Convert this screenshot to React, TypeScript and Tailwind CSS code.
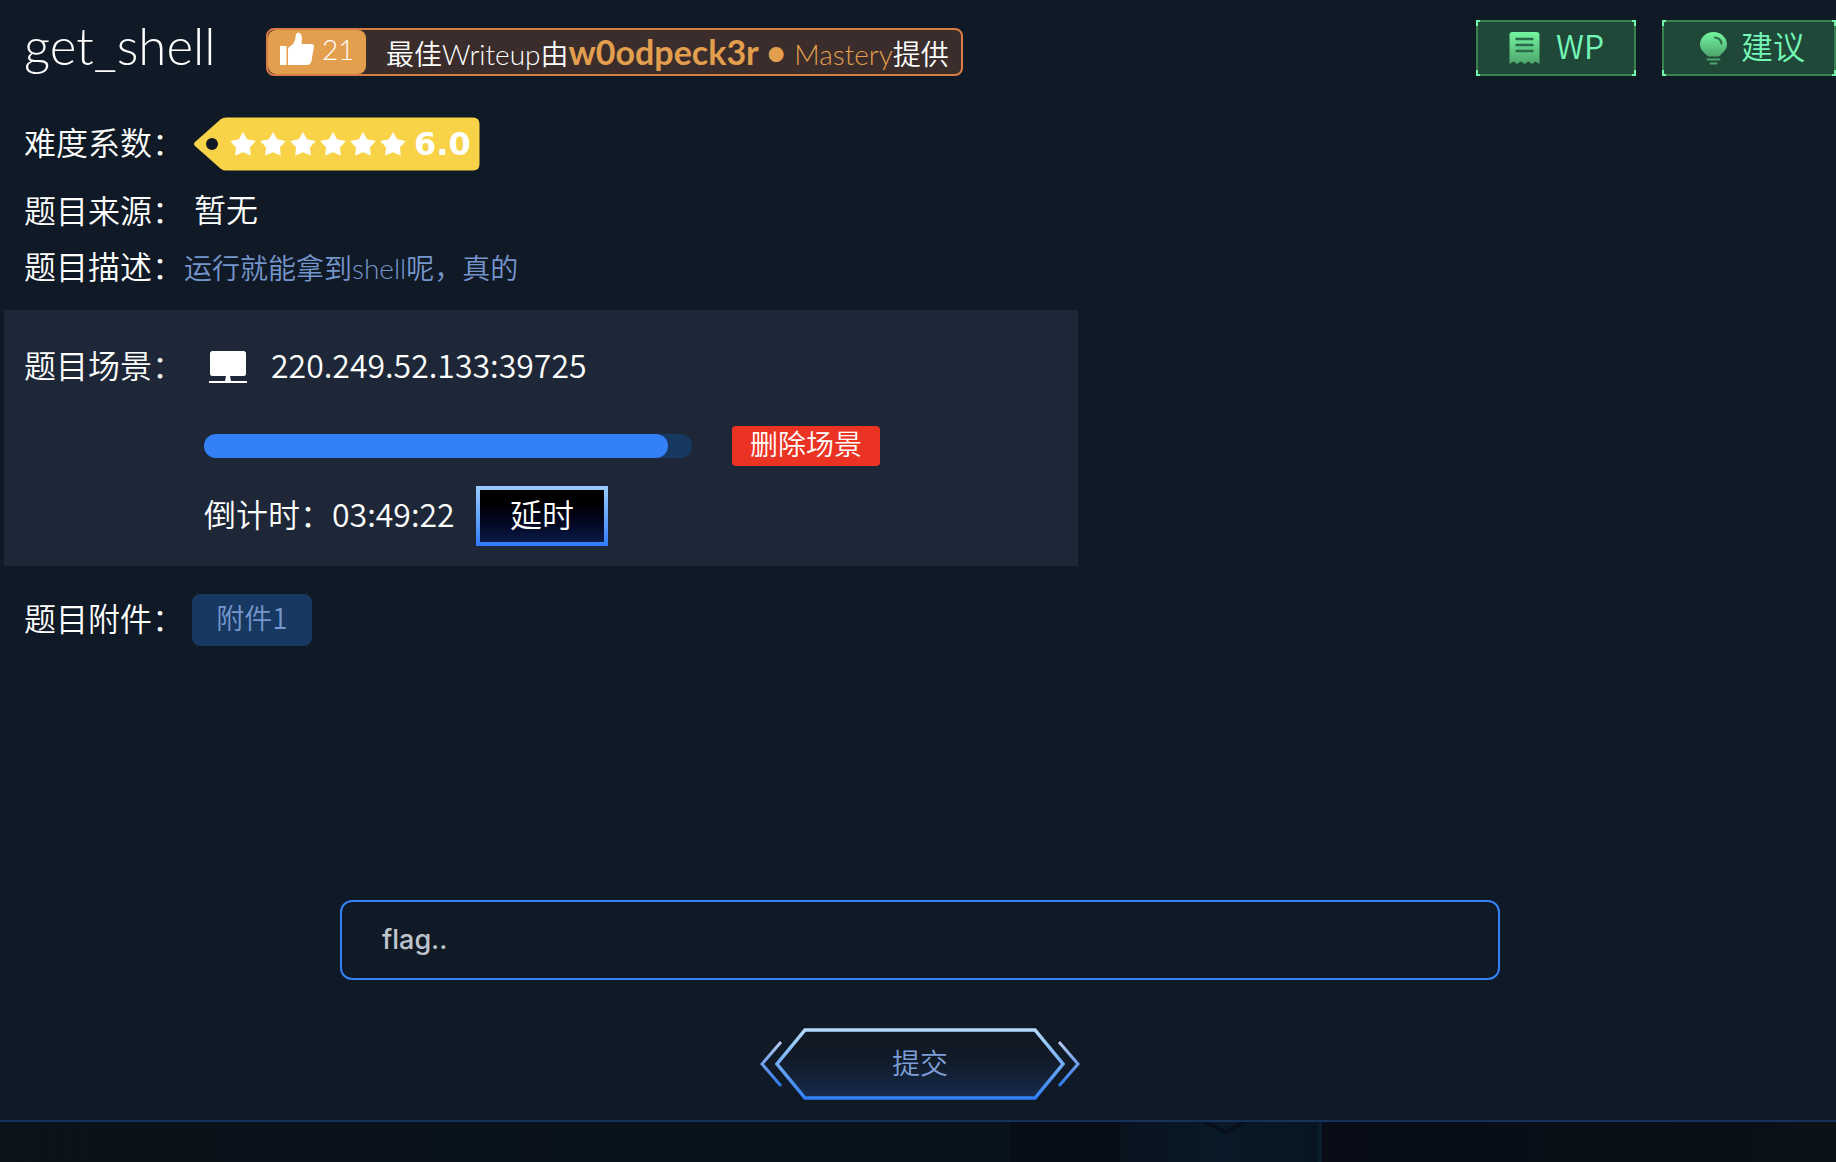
import React, { useState } from 'react';

const RATING = 6;
const PROGRESS = 95;

const RatingTag: React.FC<{ stars: number }> = ({ stars }) => (
    <div className="relative ml-[10px] flex h-[54px] w-[286px] items-center pl-9">
        <svg className="absolute inset-0" width="286" height="54" viewBox="0 0 286 54" aria-hidden="true">
            <path
                fillRule="evenodd"
                d="M1 25 L27 2 Q29 0.5 32 0.5 H279 Q285.5 0.5 285.5 7 V47 Q285.5 53.5 279 53.5 H32 Q29 53.5 27 52 L1 29 Q-1 27 1 25Z M12 27 a6 6 0 1 0 12 0 a6 6 0 1 0 -12 0Z"
                fill="#f8d348"
            />
        </svg>
        <div className="relative flex gap-1">
            {Array.from({ length: stars }).map((_, i) => (
                <svg key={i} width="26" height="26" viewBox="0 0 26 26" fill="#fff" aria-hidden="true">
                    <path d="M13 1 L17.2 8.2 L25.8 10 L20 16.2 L20.8 24.5 L13 21.2 L5.2 24.5 L6 16.2 L0.2 10 L8.8 8.2Z" />
                </svg>
            ))}
        </div>
        <span className="relative ml-2 font-['DejaVu_Sans',sans-serif] text-[32px] leading-none font-bold">{stars.toFixed(1)}</span>
    </div>
);

const ThumbIcon = () => (
    <svg width="34" height="34" viewBox="0 0 34 34" fill="#fff" aria-hidden="true">
        <path d="M0 14 H6.5 V33 H0Z" />
        <path d="M9 15 L12.5 12.5 Q15.5 9 15.8 3 Q16.3 0.5 18.5 0.5 Q22 1.5 22 6.5 L21.5 12 H32 Q34 12 34 14.5 L31.5 29 Q30.5 33 27 33 H9 Q8 33 8 32 V16.5Z" />
    </svg>
);

const NoteIcon = () => (
    <svg width="31" height="33" viewBox="0 0 31 33" aria-hidden="true">
        <defs>
            <linearGradient id="note" x1="0" y1="0" x2="0" y2="1">
                <stop offset="0" stopColor="#74f5a0" />
                <stop offset="1" stopColor="#4da56c" />
            </linearGradient>
        </defs>
        <path d="M3.5 0 H27.5 Q30.5 0 30.5 3 V32 L26.5 29.5 L23 32 L19.5 29.5 L15.5 32 L12 29.5 L8 32 L4.5 29.5 L0.5 32 V3 Q0.5 0 3.5 0Z" fill="url(#note)" />
        <path d="M7.5 7 H23.5 M7.5 13 H23.5 M7.5 19 H23.5" stroke="#2b6a49" strokeWidth="2.4" strokeLinecap="round" />
    </svg>
);

const BulbIcon = () => (
    <svg width="27" height="33" viewBox="0 0 27 33" aria-hidden="true">
        <defs>
            <linearGradient id="bulb" x1="0" y1="0" x2="0" y2="1">
                <stop offset="0" stopColor="#74f5a0" />
                <stop offset="1" stopColor="#4da56c" />
            </linearGradient>
        </defs>
        <path d="M13.5 0 C21 0 27 5.5 27 12.5 C27 17 24 19.5 21 22.5 Q19.5 24.5 18 24.5 H9 Q7.5 24.5 6 22.5 C3 19.5 0 17 0 12.5 C0 5.5 6 0 13.5 0Z" fill="url(#bulb)" />
        <path d="M15 5.5 Q20.5 6 21.5 11.5" stroke="#2b6a49" strokeWidth="2" strokeLinecap="round" fill="none" />
        <path d="M7.5 27.5 H19.5 M10.5 31.5 H16.5" stroke="#4da56c" strokeWidth="2" strokeLinecap="round" />
    </svg>
);

const MonitorIcon = () => (
    <svg width="38" height="32" viewBox="0 0 38 32" fill="#fff" aria-hidden="true">
        <rect x="1" y="0" width="36" height="25" rx="2.5" />
        <path d="M17 25 H21 L22 30 H38 V32 H0 V30 H16Z" />
    </svg>
);

// Green action button with bright corner brackets
const HeaderButton: React.FC<{ icon: React.ReactNode; className: string; children: React.ReactNode }> = ({ icon, className, children }) => (
    <button type="button" className={`relative flex h-14 items-center border-2 border-[#37804f] bg-[#1f4838] text-[32px] leading-none text-[#74f8b8] ${className}`}>
        <span className="absolute -top-0.5 -left-0.5 h-1.5 w-1 border-t-2 border-l-2 border-[#74f8a8]" />
        <span className="absolute -top-0.5 -right-0.5 h-1.5 w-1 border-t-2 border-r-2 border-[#74f8a8]" />
        <span className="absolute -bottom-0.5 -left-0.5 h-1.5 w-1 border-b-2 border-l-2 border-[#74f8a8]" />
        <span className="absolute -right-0.5 -bottom-0.5 h-1.5 w-1 border-r-2 border-b-2 border-[#74f8a8]" />
        {icon}
        <span className="pb-1.5">{children}</span>
    </button>
);

const Label: React.FC<{ children: React.ReactNode }> = ({ children }) => (
    <span className="w-40 shrink-0 pb-1.5 text-[32px] leading-none whitespace-nowrap">{children}：</span>
);

const SubmitButton = () => (
    <button type="submit" className="relative mt-12 flex h-[72px] w-[320px] items-center justify-center pb-1 text-[28px] leading-none text-[#7d9fd8]">
        <svg className="absolute inset-0" width="320" height="72" viewBox="0 0 320 72" fill="none" aria-hidden="true">
            <defs>
                <linearGradient id="edge" gradientUnits="userSpaceOnUse" x1="0" y1="0" x2="0" y2="72">
                    <stop offset="0" stopColor="#b4dcfb" />
                    <stop offset="1" stopColor="#2f7cf6" />
                </linearGradient>
                <linearGradient id="fill" x1="0" y1="0" x2="0" y2="1">
                    <stop offset="0" stopColor="#111722" />
                    <stop offset="0.4" stopColor="#101a26" />
                    <stop offset="1" stopColor="#172a4c" />
                </linearGradient>
                <linearGradient id="wing" gradientUnits="userSpaceOnUse" x1="0" y1="13" x2="0" y2="59">
                    <stop offset="0" stopColor="#b8cdf0" />
                    <stop offset="1" stopColor="#2673ee" />
                </linearGradient>
            </defs>
            <path d="M45 2 H275 L303 36 L275 70 H45 L17 36Z" fill="url(#fill)" stroke="url(#edge)" strokeWidth="3.5" />
            <path d="M21 14 L2 36 L21 58 M299 14 L318 36 L299 58" stroke="url(#wing)" strokeWidth="3" />
        </svg>
        <span className="relative">提交</span>
    </button>
);

const App: React.FC = () => {
    const [flag, setFlag] = useState('');

    return (
        <div className="flex min-h-screen flex-col bg-[#101a26] font-['Noto_Sans_CJK_SC',sans-serif] font-[350] text-white">
            <main className="border-b-2 border-[#16315a] pb-5 pl-1">
                <header className="flex items-end justify-between pt-5 pl-5">
                    <div className="flex items-end">
                        <h1 className="h-14 w-[242px] font-['Lato',sans-serif] text-[51px] leading-[52px]">get_shell</h1>
                        <div className="flex h-12 items-center rounded-lg border-2 border-[#d97b45] bg-[#3a2d2c] pr-3 font-['Lato','Noto_Sans_CJK_SC',sans-serif] whitespace-nowrap">
                            <div className="flex h-11 w-[98px] items-center gap-2 rounded-lg bg-[#e39e4e] pb-1.5 pl-3 text-[28px] leading-none">
                                <ThumbIcon />
                                <span>21</span>
                            </div>
                            <p className="ml-5 pt-1 text-[28px] leading-[40px]">
                                最佳Writeup由
                                <span className="text-[#e39e4e]">
                                    <b className="text-[34px] leading-none font-bold">w0odpeck3r • </b>
                                    Mastery
                                </span>
                                提供
                            </p>
                        </div>
                    </div>
                    <div className="flex gap-[26px]">
                        <HeaderButton icon={<NoteIcon />} className="w-40 gap-4 pl-[31px]">WP</HeaderButton>
                        <HeaderButton icon={<BulbIcon />} className="w-[174px] gap-3.5 pl-9">建议</HeaderButton>
                    </div>
                </header>

                <div className="mt-10 flex h-14 items-center pl-5">
                    <Label>难度系数</Label>
                    <RatingTag stars={RATING} />
                </div>
                <div className="mt-2 flex h-16 items-center pl-5">
                    <Label>题目来源</Label>
                    <span className="ml-[10px] pb-2 text-[32px] leading-none">暂无</span>
                </div>
                <div className="flex h-12 items-center pl-5">
                    <Label>题目描述</Label>
                    <span className="font-['Lato','Noto_Sans_CJK_SC',sans-serif] text-[28px] leading-none text-[#7596cc]">运行就能拿到shell呢，真的</span>
                </div>

                <section className="mt-[18px] flex w-full max-w-[1074px] bg-[#1e2738] pt-8 pb-5 pl-5">
                    <div className="flex h-[50px] items-center">
                        <Label>题目场景</Label>
                    </div>
                    <div className="ml-5">
                        <div className="flex h-[50px] items-center gap-6 pl-[5px] text-[32px] leading-none">
                            <MonitorIcon />
                            <span className="pb-1.5">220.249.52.133:39725</span>
                        </div>
                        <div className="mt-[34px] flex items-center gap-10">
                            <div className="h-6 w-[488px] rounded-full bg-[#173860]">
                                <div className="h-6 rounded-full bg-[#3480f7]" style={{ width: `${PROGRESS}%` }} />
                            </div>
                            <button type="button" className="h-10 w-[148px] rounded bg-[#eb3324] pb-1.5 text-[28px] leading-none">删除场景</button>
                        </div>
                        <div className="mt-5 flex items-center text-[32px] leading-none">
                            <span className="w-32 pb-1.5 whitespace-nowrap">倒计时：</span>
                            <span className="w-36 pb-1.5">03:49:22</span>
                            <button type="button" className="h-[60px] w-[132px] bg-linear-to-b from-[#9bcbff] to-[#2f7bff] p-1">
                                <span className="flex h-full items-center justify-center bg-linear-to-b from-black to-[#0a1a48] pb-1.5">延时</span>
                            </button>
                        </div>
                    </div>
                </section>

                <div className="mt-7 flex h-[52px] items-center pl-5">
                    <Label>题目附件</Label>
                    <a href="#attachment" className="ml-2 flex h-[52px] w-[120px] items-center justify-center rounded-lg bg-[#173860] pb-1.5 text-[28px] leading-none text-[#7596cc]">附件1</a>
                </div>

                <form className="mt-[254px] flex flex-col items-center" onSubmit={(e) => e.preventDefault()}>
                    <input
                        type="text"
                        aria-label="flag"
                        placeholder="flag.."
                        value={flag}
                        onChange={(e) => setFlag(e.target.value)}
                        className="h-20 w-full max-w-[1160px] rounded-xl border-2 border-[#3480f7] bg-transparent px-10 pb-0.5 font-['Inter',sans-serif] text-[27px] font-medium outline-none placeholder:text-[#c0c4cc]"
                    />
                    <SubmitButton />
                </form>
            </main>

            <footer className="flex min-h-10 flex-1 bg-linear-to-r from-[#0b131a] via-[#080f18] to-[#0a1117]">
                <div className="w-[55%] bg-linear-to-r from-transparent to-[#08131c]" />
                <div className="w-[6%] bg-[#070d17]" />
                <div className="flex w-[11%] justify-center border-r-4 border-[#0a1e2d] bg-linear-to-r from-[#08131e] via-[#0a1927] to-[#081521] pl-3">
                    <svg width="56" height="14" viewBox="0 0 56 14" fill="none" aria-hidden="true">
                        <path d="M2 -3 L28 10 L54 -3" stroke="#07111b" strokeWidth="4" />
                    </svg>
                </div>
                <div className="flex-1 bg-linear-to-r from-[#070c16] to-transparent" />
            </footer>
        </div>
    );
};

export default App;
